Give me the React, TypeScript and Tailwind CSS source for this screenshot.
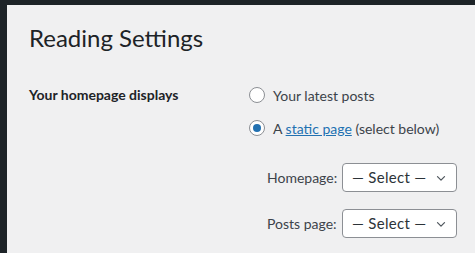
import React from "react";

function Radio({ checked }: { checked?: boolean }) {
  return (
    <span className="w-[16px] h-[16px] rounded-full border border-[#8c8f94] bg-white flex items-center justify-center shrink-0">
      {checked && <span className="w-[8px] h-[8px] rounded-full bg-[#2271b1]" />}
    </span>
  );
}

function Select() {
  return (
    <div className="w-[115px] h-[29px] shrink-0 border border-[#8c8f94] rounded-[4px] bg-white flex items-center pl-[9px] pr-[8px] text-[15px] text-[#2c3338] whitespace-nowrap">
      <span className="flex-1 tracking-[0.3px]">— Select —</span>
      <svg width="14" height="14" viewBox="0 0 20 20" className="shrink-0">
        <path d="M5 8l5 5 5-5" fill="none" stroke="#50575e" strokeWidth="1.8" strokeLinecap="round" strokeLinejoin="round" />
      </svg>
    </div>
  );
}

export default function App() {
  return (
    <div
      className="w-[475px] h-[253px] overflow-hidden bg-[#1d2327] flex flex-col"
      style={{ fontFamily: 'Lato, "Noto Sans", sans-serif' }}
    >
      <div className="h-[5px] shrink-0" />
      <div className="flex flex-1">
        <div className="w-[7px] shrink-0" />
        <div className="flex-1 bg-[#f0f0f1] pl-[22px] pt-[17px]">
          <h1 className="text-[24px] leading-[32px] text-[#1d2327] font-normal whitespace-nowrap">Reading Settings</h1>
          <div className="flex mt-[32px]">
            <div className="w-[220px] shrink-0 text-[14px] font-bold text-[#1d2327] leading-[18px] whitespace-nowrap">
              Your homepage displays
            </div>
            <div className="flex flex-col text-[14px] text-[#3c434a] whitespace-nowrap">
              <div className="flex items-center gap-[8px] h-[18px]">
                <Radio />
                <span>Your latest posts</span>
              </div>
              <div className="flex items-center gap-[8px] h-[18px] mt-[15px]">
                <Radio checked />
                <span>
                  A <a className="text-[#2271b1] underline">static page</a> (select below)
                </span>
              </div>
              <div className="flex items-center gap-[5px] mt-[26px] pl-[18px]">
                <span className="w-[70px]">Homepage:</span>
                <Select />
              </div>
              <div className="flex items-center gap-[5px] mt-[17px] pl-[18px]">
                <span className="w-[70px]">Posts page:</span>
                <Select />
              </div>
            </div>
          </div>
        </div>
      </div>
    </div>
  );
}
